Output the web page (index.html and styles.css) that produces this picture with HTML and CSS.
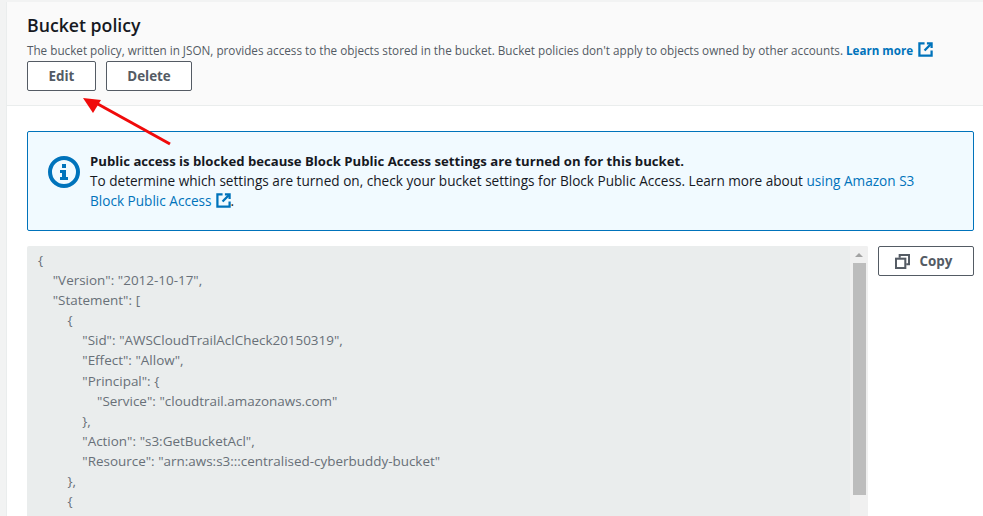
FILE: index.html
```html
<!DOCTYPE html>
<html lang="en">
<head>
<meta charset="utf-8">
<title>Bucket policy</title>
<link rel="stylesheet" href="styles.css">
</head>
<body>
<svg width="0" height="0" class="defs"><defs>
<symbol id="ext" viewBox="0 0 16 16"><path d="M7 1.5H1.5v13h13V9" fill="none" stroke="currentColor" stroke-width="2.4"/><path d="M9.5 1.5h5v5" fill="none" stroke="currentColor" stroke-width="2.4"/><path d="M14 2 7 9" fill="none" stroke="currentColor" stroke-width="2.4"/></symbol>
</defs></svg>
<main class="card">
  <header class="card-head">
    <h2 class="title">Bucket policy</h2>
    <p class="desc">The bucket policy, written in JSON, provides access to the objects stored in the bucket. Bucket policies don't apply to objects owned by other accounts. <a class="learn">Learn more<svg class="ext ext-learn"><use href="#ext"/></svg></a></p>
    <div class="actions">
      <button class="btn btn-edit">Edit</button>
      <button class="btn btn-delete">Delete</button>
    </div>
  </header>
  <section class="card-body">
    <div class="alert">
      <svg class="alert-icon" viewBox="0 0 32 32"><circle cx="16" cy="16" r="14" fill="none" stroke="#0073bb" stroke-width="4"/><rect x="14" y="8" width="4" height="4" fill="#0073bb"/><path d="M12 14h6v7h2v3h-8v-3h2v-4h-2z" fill="#0073bb"/></svg>
      <div class="alert-text">
        <div class="alert-title">Public access is blocked because Block Public Access settings are turned on for this bucket.</div>
        <div>To determine which settings are turned on, check your bucket settings for Block Public Access. Learn more about <a class="link">using Amazon S3 Block Public Access<svg class="ext ext-alert"><use href="#ext"/></svg></a>.</div>
      </div>
    </div>
    <div class="policy">
      <div class="code-wrap">
        <pre class="code">{
    "Version": "2012-10-17",
    "Statement": [
        {
            "Sid": "AWSCloudTrailAclCheck20150319",
            "Effect": "Allow",
            "Principal": {
                "Service": "cloudtrail.amazonaws.com"
            },
            "Action": "s3:GetBucketAcl",
            "Resource": "arn:aws:s3:::centralised-cyberbuddy-bucket"
        },
        {
            "Sid": "AWSCloudTrailWrite"</pre>
        <div class="scrollbar">
          <span class="scroll-up"></span>
          <span class="scroll-thumb"></span>
        </div>
      </div>
      <button class="btn btn-copy"><svg class="copy-icon" viewBox="0 0 16 16"><rect x="1" y="5" width="10" height="10" fill="none" stroke="currentColor" stroke-width="2.2"/><path d="M5 4V1h10v10h-3" fill="none" stroke="currentColor" stroke-width="2.2"/></svg>Copy</button>
    </div>
  </section>
</main>
<svg class="arrow" width="100" height="50" viewBox="0 0 100 50"><path d="M88 47 14 6" stroke="#f00a0a" stroke-width="3" fill="none"/><path d="M1 1 19 3 11 16z" fill="#f00a0a"/></svg>
</body>
</html>
```

FILE: styles.css
```css
html, body {
  margin: 0;
  height: 516px;
  overflow: hidden;
  background: #f2f3f3;
}
body {
  position: relative;
  font-family: "Open Sans", "Noto Sans", sans-serif;
  font-size: 12px;
  color: #16191f;
  padding: 2px 0 0 6px;
  box-sizing: border-box;
}
.defs { position: absolute; }
.card {
  background: #fff;
  border-left: 1px solid #eaeded;
  height: 514px;
  overflow: hidden;
}
.card-head {
  background: #fafafa;
  border-bottom: 1px solid #eaeded;
  height: 104px;
  box-sizing: border-box;
  padding: 12px 0 0 20px;
}
.title {
  margin: 0;
  font-size: 17.7px;
  line-height: 22px;
  font-weight: 600;
}
.desc {
  margin: 6px 0 0;
  font-size: 11.71px;
  line-height: 16px;
  color: #545b64;
}
.learn {
  color: #0073bb;
  font-size: 11.6px;
  font-weight: 700;
}
.ext {
  color: #0073bb;
  vertical-align: -2px;
}
.ext-learn { width: 15px; height: 15px; margin-left: 5px; }
.ext-alert { width: 15px; height: 15px; margin-left: 4px; }
.actions {
  display: flex;
  gap: 10px;
  margin-top: 2px;
}
.btn {
  font-family: inherit;
  font-size: 13.4px;
  font-weight: 700;
  color: #545b64;
  background: #fff;
  border: 1px solid #545b64;
  border-radius: 2px;
  height: 30px;
  padding: 0;
}
.btn-edit { width: 69px; }
.btn-delete { width: 86px; }
.card-body {
  padding: 25px 9px 0 20px;
}
.alert {
  display: flex;
  height: 100px;
  box-sizing: border-box;
  background: #f1faff;
  border: 1px solid #0073bb;
  border-radius: 2px;
  padding: 19px 40px 0 20px;
  gap: 10px;
}
.alert-icon {
  width: 32px;
  height: 32px;
  flex: none;
  margin-top: 5px;
}
.alert-text {
  font-size: 13.6px;
  line-height: 20px;
  color: #16191f;
}
.alert-title {
  font-size: 13.15px;
  font-weight: 700;
}
.link { color: #0073bb; }
.policy {
  display: flex;
  align-items: flex-start;
  gap: 10px;
  margin-top: 15px;
}
.code-wrap {
  display: flex;
  flex: 1;
  height: 300px;
  background: #eaeded;
  border-radius: 2px;
  overflow: hidden;
}
.code {
  flex: 1;
  margin: 0;
  padding: 4px 0 0 11px;
  font-family: inherit;
  font-size: 13.45px;
  line-height: 20.1px;
  word-spacing: 0.2px;
  color: #687078;
}
.scrollbar {
  width: 18px;
  background: #f0f0f0;
  display: flex;
  flex-direction: column;
  align-items: center;
}
.scroll-up {
  width: 0;
  height: 0;
  margin-top: 7px;
  border-left: 4px solid transparent;
  border-right: 4px solid transparent;
  border-bottom: 4px solid #a3a3a3;
}
.scroll-thumb {
  width: 13px;
  height: 232px;
  margin-top: 6px;
  background: #bdbdbd;
}
.btn-copy {
  width: 96px;
  flex: none;
  display: flex;
  align-items: center;
  justify-content: center;
  gap: 10px;
  padding-right: 5px;
}
.copy-icon { width: 15px; height: 15px; }
.arrow {
  position: absolute;
  left: 82px;
  top: 97px;
}
```
